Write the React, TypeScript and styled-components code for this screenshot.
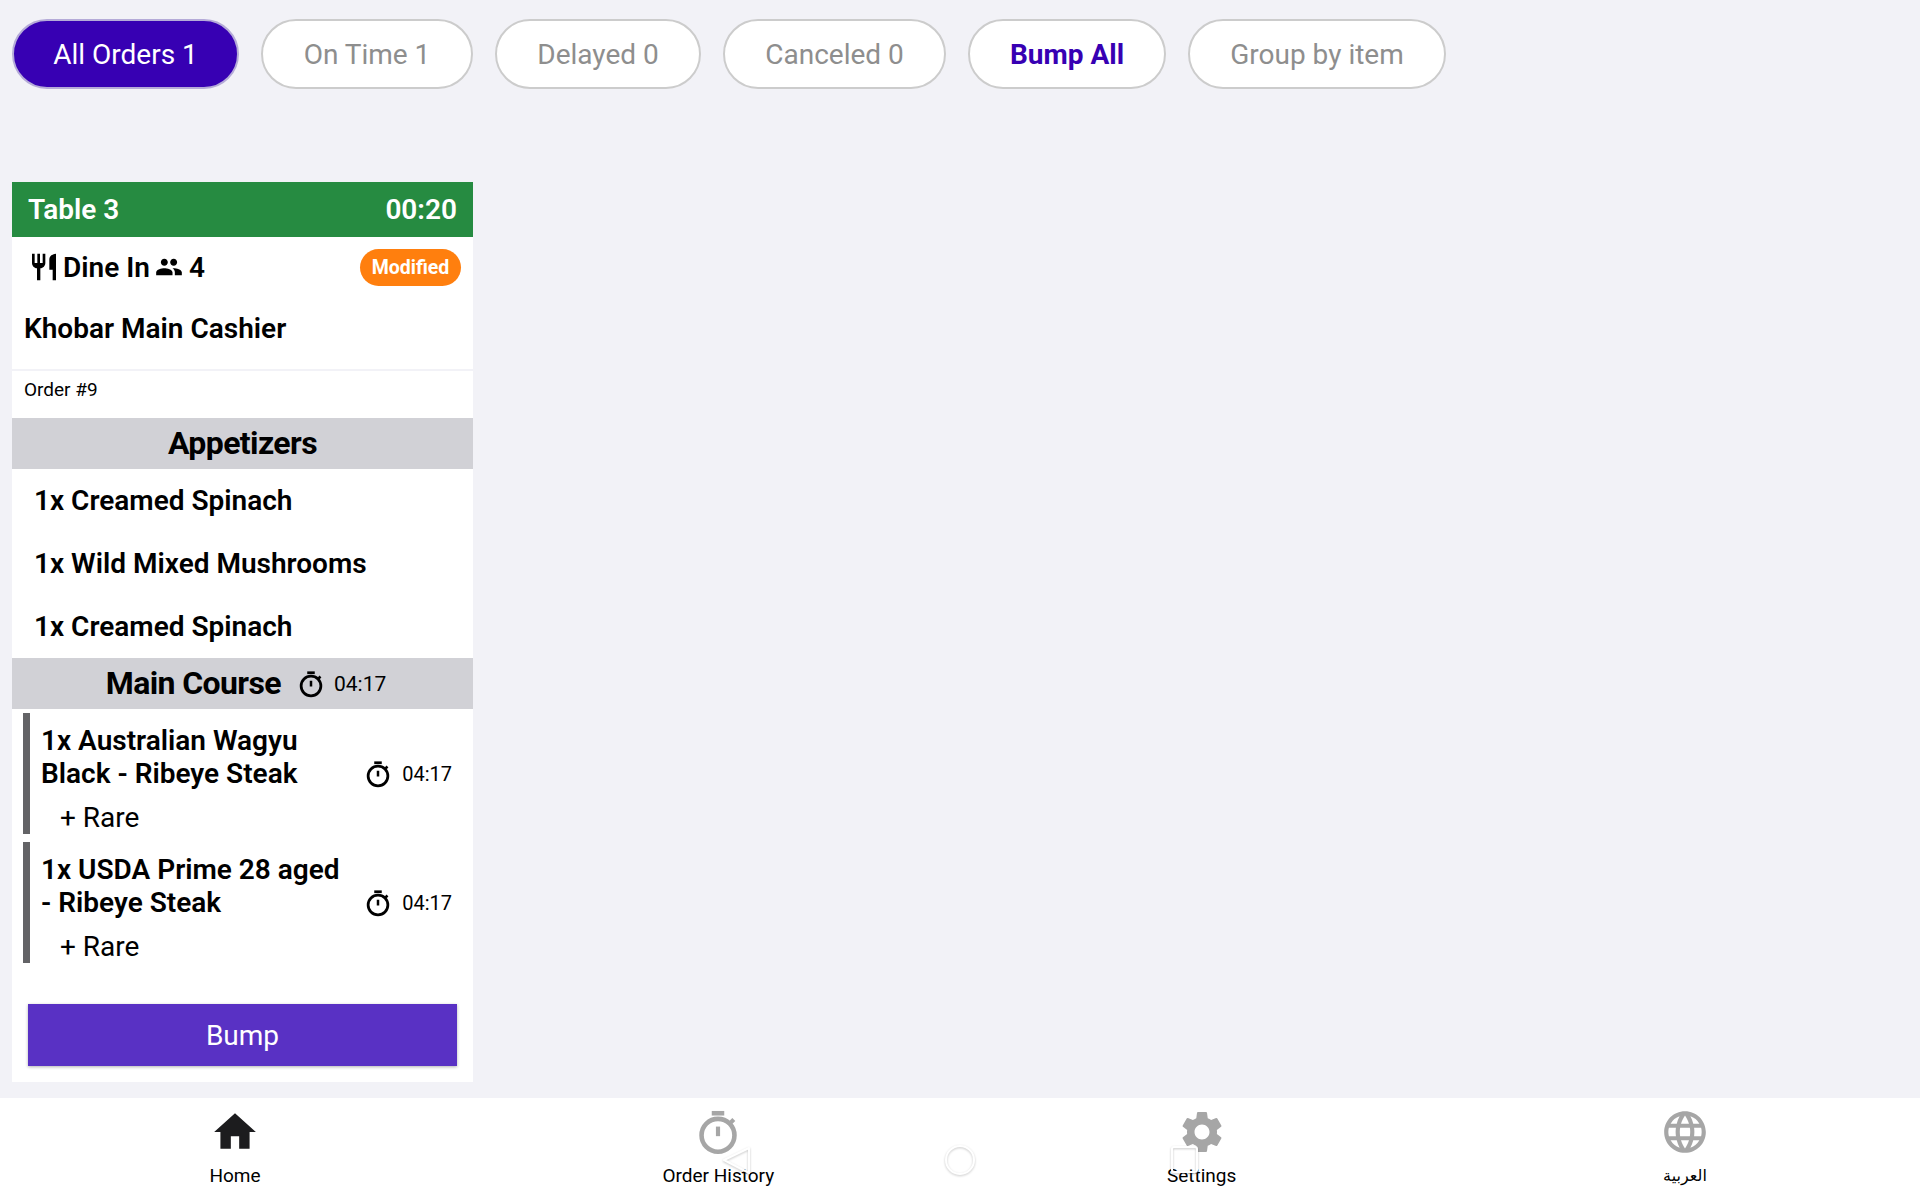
import React from 'react';
import styled, { createGlobalStyle } from 'styled-components';
import { MdHome, MdLanguage, MdPeople, MdRestaurant, MdSettings } from 'react-icons/md';

const GlobalStyle = createGlobalStyle`
  html, body {
    margin: 0;
    padding: 0;
    background: #f2f2f7;
    font-family: Roboto, "DejaVu Sans", sans-serif;
  }
`;

const Page = styled.div`
  position: relative;
  width: 1920px;
  height: 1200px;
  display: flex;
  flex-direction: column;
  overflow: hidden;
  background: #f2f2f7;
`;

const Content = styled.main`
  flex: 1;
  padding: 19px 12px 0;
`;

const Toolbar = styled.div`
  display: flex;
  gap: 22px;
`;

const Pill = styled.button<{ $active?: boolean; $accent?: boolean; $width: number }>`
  width: ${(p) => p.$width}px;
  height: 70px;
  padding: 1px 0 0;
  box-sizing: border-box;
  border-radius: 35px;
  border: 2px solid ${(p) => (p.$active ? '#b5abd8' : '#cccccc')};
  background: ${(p) => (p.$active ? '#3700b3' : '#ffffff')};
  color: ${(p) => (p.$active ? '#ffffff' : p.$accent ? '#3700b3' : '#8e8e8e')};
  font: ${(p) => (p.$accent ? 700 : 400)} 28px Roboto, sans-serif;
`;

const Card = styled.section`
  width: 461px;
  margin-top: 93px;
  background: #ffffff;
  display: flex;
  flex-direction: column;
`;

const CardHeader = styled.header`
  height: 55px;
  padding: 0 16px;
  display: flex;
  align-items: center;
  justify-content: space-between;
  background: #268b41;
  color: #ffffff;
  font-size: 28px;
  font-weight: 650;
`;

const MetaRow = styled.div`
  height: 60px;
  padding: 0 12px 0 16px;
  display: flex;
  align-items: center;
  justify-content: space-between;
`;

const ServiceType = styled.div`
  display: flex;
  align-items: center;
  color: #000000;
  font-size: 28px;
  font-weight: 600;
`;

const ServiceLabel = styled.span`
  margin: 0 5px 0 3px;
`;

const GuestCount = styled.span`
  margin-left: 6px;
`;

const Badge = styled.span`
  width: 101px;
  height: 37px;
  border-radius: 19px;
  display: flex;
  align-items: center;
  justify-content: center;
  background: #ff7f0e;
  color: #ffffff;
  font-size: 19.5px;
  font-weight: 700;
`;

const Cashier = styled.div`
  height: 74px;
  padding: 0 12px 10px;
  box-sizing: border-box;
  display: flex;
  align-items: center;
  border-bottom: 2px solid #f2f2f7;
  color: #000000;
  font-size: 28px;
  font-weight: 600;
`;

const OrderNumber = styled.div`
  height: 47px;
  padding: 0 12px 10px;
  box-sizing: border-box;
  display: flex;
  align-items: center;
  color: #000000;
  font-size: 19px;
`;

const SectionTitle = styled.div<{ $shift?: number }>`
  height: 51px;
  padding: 0 0 2px ${(p) => p.$shift ?? 0}px;
  box-sizing: border-box;
  display: flex;
  align-items: center;
  justify-content: center;
  background: #d1d1d6;
  color: #000000;
  font-size: 32px;
  font-weight: 700;
  letter-spacing: -0.6px;
`;

const SectionTimer = styled.span`
  margin: 2px 0 0 15px;
  display: flex;
  align-items: center;
  gap: 8px;
  font-size: 21px;
  font-weight: 400;
  letter-spacing: 0;
`;

const SimpleItem = styled.div`
  height: 63px;
  padding-left: 22px;
  display: flex;
  align-items: center;
  color: #000000;
  font-size: 28px;
  font-weight: 600;
`;

const TimedList = styled.div`
  padding: 4px 0 0 11px;
  display: flex;
  flex-direction: column;
  gap: 8px;
`;

const TimedItem = styled.article`
  height: 121px;
  padding-left: 11px;
  border-left: 7px solid #636366;
  display: flex;
  flex-direction: column;
`;

const ItemMain = styled.div`
  padding-top: 11px;
  display: flex;
  align-items: flex-end;
  justify-content: space-between;
`;

const ItemName = styled.div`
  width: 310px;
  color: #000000;
  font-size: 28px;
  font-weight: 600;
  line-height: 33px;
`;

const ItemTimer = styled.span`
  margin: 0 21px 1px 0;
  display: flex;
  align-items: center;
  gap: 9px;
  color: #000000;
  font-size: 20px;
`;

const Modifier = styled.div`
  margin-top: 11px;
  padding-left: 19px;
  color: #000000;
  font-size: 28px;
  line-height: 33px;
`;

const BumpButton = styled.button`
  height: 62px;
  margin: 41px 16px 16px;
  border: none;
  background: #5931c4;
  box-shadow: 0 1px 3px rgba(0, 0, 0, 0.3);
  color: #ffffff;
  font: 400 28px Roboto, sans-serif;
`;

const BottomNav = styled.nav`
  height: 102px;
  padding: 0 185px;
  display: flex;
  justify-content: space-between;
  background: #ffffff;
`;

const NavItem = styled.div<{ $active?: boolean }>`
  width: 100px;
  padding-top: 9px;
  display: flex;
  flex-direction: column;
  align-items: center;
  color: ${(p) => (p.$active ? '#1c1c1e' : '#a6a6a6')};
  white-space: nowrap;
`;

const NavLabel = styled.span<{ $small?: boolean }>`
  margin-top: 6px;
  color: #000000;
  font-size: ${(p) => (p.$small ? 16 : 19)}px;
  line-height: 26px;
`;

const SystemBar = styled.svg`
  position: absolute;
  left: 720px;
  top: 1140px;
  filter: drop-shadow(0 1px 1px rgba(0, 0, 0, 0.22));
`;

const Stopwatch: React.FC<{ size: number }> = ({ size }) => (
  <svg width={size} height={size} viewBox="0 0 24 24" fill="none" stroke="currentColor">
    <path d="M9 3h6" strokeWidth="2.2" />
    <circle cx="12" cy="13.6" r="7.9" strokeWidth="2.2" />
    <path d="M12 9.4v4.6" strokeWidth="2" />
    <path d="M18 7.6l1.6-1.6" strokeWidth="2" />
  </svg>
);

const filters = [
  { label: 'All Orders 1', width: 227, active: true },
  { label: 'On Time 1', width: 212 },
  { label: 'Delayed 0', width: 206 },
  { label: 'Canceled 0', width: 223 },
  { label: 'Bump All', width: 198, accent: true },
  { label: 'Group by item', width: 258 },
];

const appetizers = ['1x Creamed Spinach', '1x Wild Mixed Mushrooms', '1x Creamed Spinach'];

const mains = [
  { name: '1x Australian Wagyu Black - Ribeye Steak', modifier: '+ Rare' },
  { name: '1x USDA Prime 28 aged - Ribeye Steak', modifier: '+ Rare' },
];

const App: React.FC = () => {
  return (
    <Page>
      <GlobalStyle />
      <Content>
        <Toolbar>
          {filters.map((f) => (
            <Pill key={f.label} $active={f.active} $accent={f.accent} $width={f.width}>
              {f.label}
            </Pill>
          ))}
        </Toolbar>

        <Card>
          <CardHeader>
            <span>Table 3</span>
            <span>00:20</span>
          </CardHeader>
          <MetaRow>
            <ServiceType>
              <MdRestaurant size={32} />
              <ServiceLabel>Dine In</ServiceLabel>
              <MdPeople size={28} />
              <GuestCount>4</GuestCount>
            </ServiceType>
            <Badge>Modified</Badge>
          </MetaRow>
          <Cashier>Khobar Main Cashier</Cashier>
          <OrderNumber>Order #9</OrderNumber>

          <SectionTitle>Appetizers</SectionTitle>
          {appetizers.map((name, i) => (
            <SimpleItem key={i}>{name}</SimpleItem>
          ))}

          <SectionTitle $shift={7}>
            Main Course
            <SectionTimer>
              <Stopwatch size={30} />
              04:17
            </SectionTimer>
          </SectionTitle>
          <TimedList>
            {mains.map((item) => (
              <TimedItem key={item.name}>
                <ItemMain>
                  <ItemName>{item.name}</ItemName>
                  <ItemTimer>
                    <Stopwatch size={30} />
                    04:17
                  </ItemTimer>
                </ItemMain>
                <Modifier>{item.modifier}</Modifier>
              </TimedItem>
            ))}
          </TimedList>
          <BumpButton>Bump</BumpButton>
        </Card>
      </Content>

      <BottomNav>
        <NavItem $active>
          <MdHome size={50} />
          <NavLabel>Home</NavLabel>
        </NavItem>
        <NavItem>
          <Stopwatch size={50} />
          <NavLabel>Order History</NavLabel>
        </NavItem>
        <NavItem>
          <MdSettings size={50} />
          <NavLabel>Settings</NavLabel>
        </NavItem>
        <NavItem>
          <MdLanguage size={50} />
          <NavLabel $small>العربية</NavLabel>
        </NavItem>
      </BottomNav>

      {/* android soft keys on top of the nav */}
      <SystemBar width="480" height="40" viewBox="0 0 480 40" fill="none" stroke="#ffffff" strokeWidth="2">
        <path d="M29 8 L4 20 L29 33 Z" strokeLinejoin="round" />
        <circle cx="240" cy="20" r="14" />
        <rect x="452" y="7" width="25" height="25" rx="2" />
      </SystemBar>
    </Page>
  );
};

export default App;
